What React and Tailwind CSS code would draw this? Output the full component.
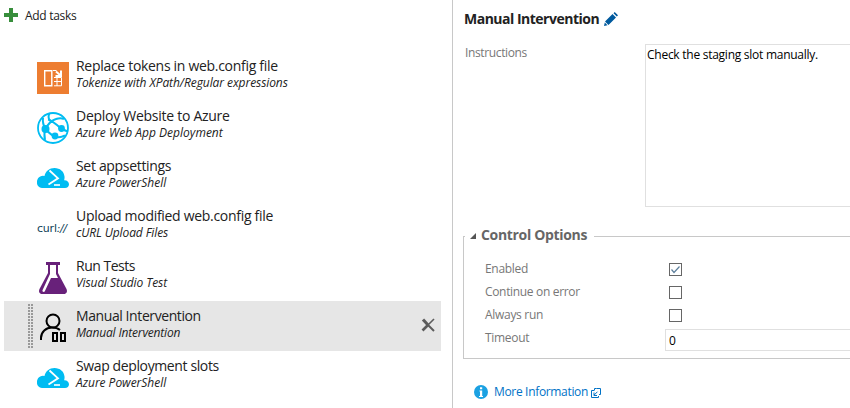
import React from "react";

function PowerShellIcon() {
  return (
    <svg width="32" height="32" viewBox="0 0 32 32" className="block">
      <path d="M5 26a5 5 0 0 1-5-5.500a6 6 0 0 1 7.500-6.500C8.500 9 12.500 6 17.500 6c5.500 0 9.500 3.500 10 8.500c.2 1.500-.1 2.700-.4 3.700c2.800-.2 4.900 1.600 4.900 4c0 2.200-1.600 3.800-4 3.800z" fill="#00bcf2" />
      <path d="M12.500 8.500L21 16.300L11.500 22.500" fill="none" stroke="#fff" strokeWidth="1.800" />
      <path d="M17 23h6" stroke="#fff" strokeWidth="1.600" />
    </svg>
  );
}

function TokenIcon() {
  return (
    <svg width="32" height="32" viewBox="0 0 32 32" className="block">
      <path d="M0 0h32v32H0z" fill="#ed7d31" />
      <path d="M7.700 8.700h7.100v15.100H7.700z" fill="none" stroke="#fff" strokeWidth="1.400" />
      <path d="M16 8.500h3.500M17 15.500h7.500v8.300h-7.500M17 19.500h8M20 16v8" fill="none" stroke="#fff" strokeWidth="1" />
      <path d="M19 9.500l4 3.500M24 8.500v5.500h-5.500" fill="none" stroke="#fff" strokeWidth="2" />
    </svg>
  );
}

function WebAppIcon() {
  return (
    <svg width="32" height="32" viewBox="0 0 32 32" className="block" fill="none" stroke="#00bcf2">
      <circle cx="16" cy="16" r="15" strokeWidth="1.800" />
      <path d="M8.500 17C11 12 14 8.500 19 7C23 5.500 25 6 27 7M11 7.500C14 8 19 12 24 16.500C27 18 29 19 30 19M8.500 17C12 21 14 23 18 24.500C22 26 25 25 28 23.500M8.500 17C6 13 5.500 10 6 6M8.500 17C7 21 7 24 8 28" strokeWidth="2" />
      <path d="M12.500 1.500C11 4 11 6 13 9" strokeWidth="2" />
      <g fill="#00bcf2" stroke="none">
        <circle cx="8.500" cy="17" r="4" />
        <circle cx="18" cy="24" r="3.400" />
        <circle cx="24.500" cy="16.500" r="3.400" />
      </g>
    </svg>
  );
}

function CurlIcon() {
  return (
    <div className="flex h-8 w-8 items-center whitespace-nowrap font-['DejaVu_Sans',sans-serif] text-[11px] leading-none text-[#0f3f57]">
      <span className="tracking-[-0.2px]">curl</span><span className="italic tracking-[-0.5px]">://</span>
    </div>
  );
}

function FlaskIcon() {
  return (
    <svg width="32" height="32" viewBox="0 0 32 32" className="block">
      <path d="M9 0h14v3h-2v8l8.500 16c1.200 2.600 0 5-2.500 5H5c-2.500 0-3.700-2.400-2.500-5L11 11V3H9z" fill="#68217a" />
      <path d="M13 3h6v9l2 4h-7L7.700 29.500c-.8 1-2.700.2-2.200-1.200L13 12z" fill="#fff" />
    </svg>
  );
}

function ManualIcon() {
  return (
    <svg width="32" height="32" viewBox="0 0 32 32" className="block" fill="none" stroke="#000" strokeWidth="2">
      <circle cx="16" cy="9" r="6.500" />
      <path d="M4 28v-2c0-6 5-10.500 11-10.500c3.500 0 6 .8 8 2.500" />
      <path d="M16 21h4v8h-4zM24 21h4v8h-4z" />
    </svg>
  );
}

const tasks = [
  { title: "Replace tokens in web.config file", sub: "Tokenize with XPath/Regular expressions", Icon: TokenIcon, ts: "tracking-[-0.3px]", ss: "tracking-[-0.075px]" },
  { title: "Deploy Website to Azure", sub: "Azure Web App Deployment", Icon: WebAppIcon, ts: "tracking-[-0.27px]", ss: "tracking-[0.02px]" },
  { title: "Set appsettings", sub: "Azure PowerShell", Icon: PowerShellIcon, ts: "tracking-[-0.32px]", ss: "tracking-[-0.03px]" },
  { title: "Upload modified web.config file", sub: "cURL Upload Files", Icon: CurlIcon, ts: "tracking-[-0.3px]", ss: "tracking-[-0.11px]" },
  { title: "Run Tests", sub: "Visual Studio Test", Icon: FlaskIcon, ts: "tracking-[-0.5px]", ss: "tracking-[-0.08px]" },
  { title: "Manual Intervention", sub: "Manual Intervention", Icon: ManualIcon, ts: "tracking-[-0.41px]", ss: "tracking-[-0.17px]", selected: true },
  { title: "Swap deployment slots", sub: "Azure PowerShell", Icon: PowerShellIcon, ts: "tracking-[-0.38px]", ss: "tracking-[-0.03px]" },
];

function Grip() {
  return (
    <svg width="5" height="44" viewBox="0 0 5 44" className="block" fill="#999">
      {Array.from({ length: 15 }, (_, i) => (
        <React.Fragment key={i}>
          <rect x="0" y={i * 3} width="2" height="2" />
          <rect x="3" y={i * 3} width="2" height="2" />
        </React.Fragment>
      ))}
    </svg>
  );
}

function TaskRow({ title, sub, Icon, ts, ss, selected }) {
  return (
    <div className={selected ? "flex h-[50px] bg-[#e6e6e6]" : "flex h-[50px]"}>
      <div className="w-[33px] shrink-0 pl-6 pt-[3px]">{selected && <Grip />}</div>
      <div className="w-[39px] shrink-0 pt-[11px]"><Icon /></div>
      <div className="flex-1 whitespace-nowrap pt-[6px] text-[#222]">
        <div className={"text-[14px] leading-[18px] " + ts}><span>{title}</span></div>
        <div className={"text-[12px] italic leading-4 " + ss}><span>{sub}</span></div>
      </div>
      {selected && (
        <svg width="14" height="14" viewBox="0 0 14 14" className="mr-[6px] mt-[17px] block" fill="none" stroke="#5c5c5c">
          <path d="M2 1.500L7 7" strokeWidth="3" />
          <path d="M7 7L13 13" strokeWidth="2" />
          <path d="M13 1L7 7" strokeWidth="1.600" />
          <path d="M7 7L1.500 12.500" strokeWidth="2.600" />
        </svg>
      )}
    </div>
  );
}

function CheckRow({ label, checked, cls }) {
  return (
    <div className="flex h-[23px] items-center">
      <span className={"w-[184px] -mt-px " + cls}><span>{label}</span></span>
      <div className="h-[13px] w-[13px] border border-[#666] bg-white">
        {checked && (
          <svg width="11" height="11" viewBox="0 0 11 11" className="block">
            <path d="M1.500 5.500L4 8.500L9.500 2.500" fill="none" stroke="#5d7f9c" strokeWidth="1.200" />
          </svg>
        )}
      </div>
    </div>
  );
}

export default function App() {
  return (
    <div className="flex h-[408px] w-[850px] overflow-hidden bg-white font-['Open_Sans','Noto_Sans',sans-serif] text-[12px] text-[#222]">
      <div className="w-[452px] shrink-0 pl-1">
        <div className="flex h-[51px] pt-[8px]">
          <svg width="14" height="14" viewBox="0 0 14 14" className="block">
            <path d="M5 0h4v5h5v4H9v5H5V9H0V5h5z" fill="#388e3c" />
          </svg>
          <span className="ml-[7px] leading-4 tracking-[-0.3px]">Add tasks</span>
        </div>
        <div className="w-[437px]">
          {tasks.map((t) => <TaskRow key={t.title} {...t} />)}
        </div>
      </div>
      <div className="flex w-[398px] flex-col border-l border-[#c8c8c8]">
        <div className="flex h-[44px] items-start pl-[11px] pt-[9px]">
          <span className="whitespace-nowrap text-[14px] font-bold leading-5 tracking-[-0.5px]">Manual Intervention</span>
          <svg width="14" height="14" viewBox="0 0 14 14" className="ml-[5px] mt-[3px] block" fill="#005a9e">
            <path d="M8.500 2L12 5.500L4.500 13L1 9.500zM9.500 1.200L10.700 0L14 3.200L12.800 4.500zM.8 10.500L3.500 13.200L0 14z" />
          </svg>
        </div>
        <div className="flex h-[163px]">
          <span className="w-[192px] shrink-0 pl-3 pt-[1px] leading-4 text-[#777]"><span className="tracking-[-0.37px]">Instructions</span></span>
          <div className="flex-1 border border-r-0 border-[#e0e0e0] pl-[1px] pt-[2px] leading-4 text-black"><span className="tracking-[-0.26px]">Check the staging slot manually.</span></div>
        </div>
        <div className="mt-5 flex h-[18px] items-center pl-[10px] text-[#666]">
          <div className="h-px w-[2px] bg-[#c8c8c8]" />
          <svg width="6" height="6" viewBox="0 0 6 6" className="ml-[5px] -mt-px block"><path d="M6 0v6H0z" fill="#555" /></svg>
          <span className="ml-[5px] -mt-[2px] whitespace-nowrap text-[14px] font-bold leading-[18px] tracking-[-0.33px]">Control Options</span>
          <div className="ml-[7px] h-px flex-1 bg-[#c8c8c8]" />
        </div>
        <div className="mt-[-9px] ml-[10px] h-[123px] border-b border-l border-[#c8c8c8] pl-[21px] pt-[22px] text-[#777]">
          <CheckRow label="Enabled" checked cls="tracking-[-0.3px]" />
          <CheckRow label="Continue on error" cls="tracking-[-0.33px]" />
          <CheckRow label="Always run" cls="tracking-[-0.3px]" />
          <div className="flex h-[23px]">
            <span className="w-[180px] leading-[22px]"><span className="tracking-[-0.3px]">Timeout</span></span>
            <div className="mt-[2px] h-[22px] flex-1 border border-r-0 border-[#e0e0e0] pl-[3px] leading-[22px] text-black">0</div>
          </div>
        </div>
        <div className="mt-[25px] flex h-4 items-center pl-[21px] text-[#0072c6]">
          <svg width="14" height="14" viewBox="0 0 14 14" className="block">
            <circle cx="7" cy="7" r="7" fill="#1ba1e2" />
            <path d="M5.500 5.500h2.700V11H9v1H5v-1h1V6.500h-.5zM6 2.300h2.200v2H6z" fill="#fff" />
          </svg>
          <span className="ml-[6px] whitespace-nowrap leading-4 tracking-[-0.33px]">More Information</span>
          <svg width="10" height="10" viewBox="0 0 10 10" className="ml-[3px] mt-[2px] block" fill="none" stroke="#0072c6">
            <path d="M3 2.500H.5v7h7V8M5.500 .5h4v6h-1.500M5.500 .5h-2v2M3 7.200l3.500-3.500M3 4.500v3h3" />
          </svg>
        </div>
      </div>
    </div>
  );
}
